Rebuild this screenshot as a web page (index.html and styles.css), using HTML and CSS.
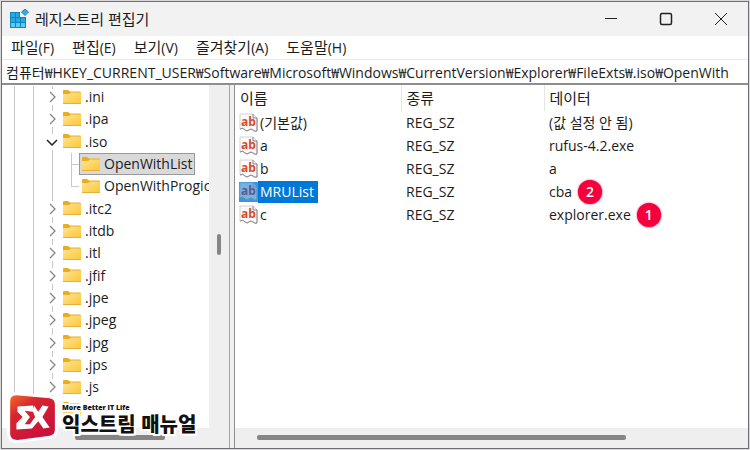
FILE: index.html
```html
<!DOCTYPE html>
<html lang="ko">
  <head>
    <meta charset="utf-8">
    <meta name="viewport" content="width=device-width, initial-scale=1">
    <title>레지스트리 편집기</title>
    <link rel="stylesheet" href="styles.css">
  </head>
  <body>
    <svg class="defs" aria-hidden="true">
      <defs>
        <linearGradient id="folder-fill" x1="0" y1="0" x2="1" y2="1">
          <stop offset="0" stop-color="#ffe593"/>
          <stop offset="1" stop-color="#fcc536"/>
        </linearGradient>
        <linearGradient id="logo-fill" x1="0" y1="0" x2="0.7" y2="1">
          <stop offset="0" stop-color="#f26a2a"/>
          <stop offset="0.35" stop-color="#d8252f"/>
          <stop offset="1" stop-color="#c8103c"/>
        </linearGradient>
      </defs>
      <symbol id="folder" viewBox="0 0 18 15">
        <path d="M0 1Q0 0 1 0H5L7 1.500H17Q18 1.500 18 3V6H0Z" fill="#e9ad1e"/>
        <path d="M0 4H6L8 2.500H17Q18 2.500 18 3V14H0Z" fill="url(#folder-fill)"/>
        <path d="M0 13.500H18" stroke="#e5b03c"/>
      </symbol>
      <symbol id="closed" viewBox="0 0 12 12">
        <path d="M4 1L9 6L4 11" fill="none" stroke="#858585" stroke-width="1.3"/>
      </symbol>
      <symbol id="open" viewBox="0 0 12 12">
        <path d="M1 4L6 9L11 4" fill="none" stroke="#222" stroke-width="1.5"/>
      </symbol>
      <symbol id="sheet" viewBox="0 0 19 20">
        <path d="M1 1H14L18 5V18Q16 19 14 17Q12 15 10 17Q8 19 6 17Q4 14 1 16Z" fill="#fbfbfb" stroke="#d2d2d2"/>
        <path d="M14 1V5H18V18Q16 19 14 17Q12 15 10 17Q8 19 6 17Q4 14 1 16" fill="none" stroke="#858585"/>
      </symbol>
    </svg>

    <div class="window">
      <header class="titlebar">
        <svg class="app-icon" viewBox="0 0 20 20" aria-hidden="true">
          <path d="M1 3H11V8H17V19H1Z" fill="#0b86be"/>
          <path d="M2 4H6V8H2ZM7 4H10V8H7ZM2 9H6V13H2ZM7 9H11V13H7ZM12 9H16V13H12Z" fill="#27a9df"/>
          <path d="M2 14H6V18H2ZM7 14H11V18H7ZM12 14H16V18H12Z" fill="#5ccbf2"/>
          <path d="M16 0L19.500 3L16 6.500L12.500 3Z" fill="#38ace0" stroke="#1686b8"/>
        </svg>
        <h1 class="title">레지스트리 편집기</h1>
        <div class="window-buttons">
          <button class="window-button" aria-label="최소화">
            <svg viewBox="0 0 14 14"><path d="M1 6.500H13"/></svg>
          </button>
          <button class="window-button" aria-label="최대화">
            <svg viewBox="0 0 14 14"><rect x="1.500" y="1.500" width="11" height="11" rx="1.500" stroke-width="1.500"/></svg>
          </button>
          <button class="window-button" aria-label="닫기">
            <svg viewBox="0 0 14 14"><path d="M1 1L13 13M13 1L1 13"/></svg>
          </button>
        </div>
      </header>

      <nav class="menu">
        <button>파일<span>(F)</span></button>
        <button>편집<span>(E)</span></button>
        <button>보기<span>(V)</span></button>
        <button>즐겨찾기<span>(A)</span></button>
        <button>도움말<span>(H)</span></button>
      </nav>

      <input class="address" type="text" aria-label="주소" value="컴퓨터₩HKEY_CURRENT_USER₩Software₩Microsoft₩Windows₩CurrentVersion₩Explorer₩FileExts₩.iso₩OpenWith">

      <main class="panes">
        <section class="tree-pane">
          <ul class="tree">
            <li class="node"><button class="toggle" aria-label="펼치기"><svg><use href="#closed"/></svg></button><svg class="folder"><use href="#folder"/></svg><span class="label">.ini</span></li>
            <li class="node"><button class="toggle" aria-label="펼치기"><svg><use href="#closed"/></svg></button><svg class="folder"><use href="#folder"/></svg><span class="label">.ipa</span></li>
            <li class="node"><button class="toggle" aria-label="접기"><svg><use href="#open"/></svg></button><svg class="folder"><use href="#folder"/></svg><span class="label">.iso</span></li>
            <li class="node child"><span class="branch"></span><span class="item selected"><svg class="folder"><use href="#folder"/></svg><span class="label">OpenWithList</span></span></li>
            <li class="node child last"><span class="branch"></span><span class="item"><svg class="folder"><use href="#folder"/></svg><span class="label">OpenWithProgic</span></span></li>
            <li class="node"><button class="toggle" aria-label="펼치기"><svg><use href="#closed"/></svg></button><svg class="folder"><use href="#folder"/></svg><span class="label">.itc2</span></li>
            <li class="node"><button class="toggle" aria-label="펼치기"><svg><use href="#closed"/></svg></button><svg class="folder"><use href="#folder"/></svg><span class="label">.itdb</span></li>
            <li class="node"><button class="toggle" aria-label="펼치기"><svg><use href="#closed"/></svg></button><svg class="folder"><use href="#folder"/></svg><span class="label">.itl</span></li>
            <li class="node"><button class="toggle" aria-label="펼치기"><svg><use href="#closed"/></svg></button><svg class="folder"><use href="#folder"/></svg><span class="label">.jfif</span></li>
            <li class="node"><button class="toggle" aria-label="펼치기"><svg><use href="#closed"/></svg></button><svg class="folder"><use href="#folder"/></svg><span class="label">.jpe</span></li>
            <li class="node"><button class="toggle" aria-label="펼치기"><svg><use href="#closed"/></svg></button><svg class="folder"><use href="#folder"/></svg><span class="label">.jpeg</span></li>
            <li class="node"><button class="toggle" aria-label="펼치기"><svg><use href="#closed"/></svg></button><svg class="folder"><use href="#folder"/></svg><span class="label">.jpg</span></li>
            <li class="node"><button class="toggle" aria-label="펼치기"><svg><use href="#closed"/></svg></button><svg class="folder"><use href="#folder"/></svg><span class="label">.jps</span></li>
            <li class="node"><button class="toggle" aria-label="펼치기"><svg><use href="#closed"/></svg></button><svg class="folder"><use href="#folder"/></svg><span class="label">.js</span></li>
            <li class="node"><span class="toggle"></span><svg class="folder"><use href="#folder"/></svg></li>
          </ul>
          <div class="scroll-y"><div class="thumb-y"></div></div>
          <div class="scroll-x"><div class="thumb-x"></div></div>
        </section>

        <section class="list-pane">
          <table class="values">
            <thead>
              <tr><th class="col-name">이름</th><th class="col-type">종류</th><th>데이터</th></tr>
            </thead>
            <tbody>
              <tr><td><span class="name"><svg><use href="#sheet"/><text x="2" y="13">ab</text></svg><span>(기본값)</span></span></td><td>REG_SZ</td><td>(값 설정 안 됨)</td></tr>
              <tr><td><span class="name"><svg><use href="#sheet"/><text x="2" y="13">ab</text></svg><span>a</span></span></td><td>REG_SZ</td><td>rufus-4.2.exe</td></tr>
              <tr><td><span class="name"><svg><use href="#sheet"/><text x="2" y="13">ab</text></svg><span>b</span></span></td><td>REG_SZ</td><td>a</td></tr>
              <tr><td><span class="name current"><svg><use href="#sheet"/><text x="2" y="13">ab</text></svg><span>MRUList</span></span></td><td>REG_SZ</td><td><span class="marked">cba <b class="badge">2</b></span></td></tr>
              <tr><td><span class="name"><svg><use href="#sheet"/><text x="2" y="13">ab</text></svg><span>c</span></span></td><td>REG_SZ</td><td><span class="marked">explorer.exe <b class="badge">1</b></span></td></tr>
            </tbody>
          </table>
          <div class="scroll-x"><div class="thumb-x"></div></div>
        </section>
      </main>
    </div>

    <div class="brand">
      <svg class="brand-logo" viewBox="0 0 50 50" aria-hidden="true">
        <path d="M10 4L42 7Q47 8 47 13V37Q47 42 42 43L11 47Q4 47 4 41V10Q4 4 10 4Z" fill="url(#logo-fill)" stroke="#fff" stroke-width="6" stroke-linejoin="round" paint-order="stroke"/>
        <path d="M26 17V14L11 15V20L16 25L10 31V37L25 36L31 29L36 36L42 35L35 25L41 15L35 14L31 20L27 14ZM26 20L28 25L23 32L18 32L23 25L18 19Z" fill="#fff" fill-rule="evenodd"/>
      </svg>
      <div class="brand-text">
        <span class="brand-tagline">More Better IT Life</span>
        <strong class="brand-name">익스트림 매뉴얼</strong>
      </div>
    </div>
  </body>
</html>
```
FILE: styles.css
```css
* {
  box-sizing: border-box;
}

body {
  margin: 0;
  height: 100vh;
  padding: 1px;
  background: #d9d9d9;
  color: #1c1c1c;
  font: 14px/20px "Open Sans", "Noto Sans CJK KR", sans-serif;
  overflow: hidden;
}

button {
  padding: 0;
  border: 0;
  background: none;
  color: inherit;
  font: inherit;
}

.defs {
  position: absolute;
  width: 0;
  height: 0;
}

.window {
  display: flex;
  flex-direction: column;
  height: 100%;
  border: 1px solid #6c7074;
  background: #fff;
}

.titlebar {
  display: flex;
  align-items: center;
  height: 34px;
  padding-left: 7px;
  background: #f2f2f2;
  flex-shrink: 0;
}

.app-icon {
  width: 20px;
  height: 20px;
}

.title {
  flex: 1;
  margin: 0 0 0 6px;
  font-size: 15px;
  font-weight: 400;
}

.window-buttons {
  display: flex;
}

.window-button {
  display: flex;
  align-items: center;
  justify-content: center;
  width: 55px;
  height: 32px;
}

.window-button svg {
  width: 14px;
  height: 14px;
  fill: none;
  stroke: #222;
}

.menu {
  display: flex;
  gap: 18px;
  height: 24px;
  padding: 0 9px;
  border-bottom: 1px solid #e9e9e9;
  font-size: 15px;
  flex-shrink: 0;
}

.menu span {
  font-size: 14px;
}

.address {
  width: 100%;
  height: 23px;
  padding: 0 4px;
  border: 0;
  color: inherit;
  font: inherit;
  flex-shrink: 0;
}

.panes {
  display: flex;
  flex: 1;
  min-height: 0;
  border-top: 2px solid #8e8e8e;
  background: #f0f0f0;
}

.tree-pane {
  display: grid;
  grid-template: 1fr 20px / 1fr 20px;
  width: 228px;
  border-right: 1px solid #a5a5a5;
}

.tree {
  display: grid;
  grid-auto-rows: 1fr;
  min-width: 0;
  margin: 0;
  padding: 1px 0 7px 12px;
  background: #fff;
  list-style: none;
  overflow: hidden;
}

.node {
  display: flex;
  align-items: center;
  min-width: 0;
  padding-left: 31px;
  border-left: 1px solid #c9c9c9;
  background:
    linear-gradient(#c9c9c9, #c9c9c9) 18px 0 / 1px 100% no-repeat,
    linear-gradient(#c9c9c9, #c9c9c9) 37px 0 / 1px 100% no-repeat;
  white-space: nowrap;
}

.toggle {
  display: flex;
  justify-content: center;
  width: 12px;
  height: 16px;
  margin-right: 5px;
  background: #fff;
}

.toggle svg {
  width: 12px;
  height: 16px;
}

.folder {
  width: 18px;
  height: 15px;
  flex-shrink: 0;
}

.label {
  margin-left: 4px;
}

.child {
  padding-left: 56px;
  background:
    linear-gradient(#c9c9c9, #c9c9c9) 18px 0 / 1px 100% no-repeat,
    linear-gradient(#c9c9c9, #c9c9c9) 37px 0 / 1px 100% no-repeat,
    linear-gradient(#c9c9c9, #c9c9c9) 56px 0 / 1px 100% no-repeat;
}

.last {
  background-size: 1px 100%, 1px 100%, 1px 50%;
}

.branch {
  width: 8px;
  border-top: 1px solid #c9c9c9;
  flex-shrink: 0;
}

.item {
  display: flex;
  align-items: center;
  height: 22px;
  padding: 0 2px;
  border: 1px solid transparent;
}

.selected {
  border-color: #999;
  background: #d9d9d9;
}

.scroll-y {
  display: flex;
  align-items: center;
  justify-content: center;
  padding-bottom: 24px;
  background: #efefef;
}

.thumb-y {
  width: 4px;
  height: 21px;
  border-radius: 2px;
  background: #858585;
}

.scroll-x {
  display: flex;
  align-items: center;
  height: 20px;
  padding-bottom: 2px;
  background: #efefef;
}

.thumb-x {
  height: 5px;
  border-radius: 2px;
  background: #858585;
}

.tree-pane .scroll-x {
  grid-column: 1 / 3;
}

.tree-pane .thumb-x {
  width: 40%;
  margin-left: 32%;
}

.list-pane {
  display: flex;
  flex: 1;
  flex-direction: column;
  justify-content: space-between;
  margin-left: 4px;
  border-left: 1px solid #8e8e8e;
  background: #fff;
}

.list-pane .thumb-x {
  width: 72%;
  margin-left: 22px;
}

.values {
  width: 100%;
  border-collapse: collapse;
  table-layout: fixed;
}

.values th,
.values td {
  height: 23px;
  padding: 0 0 0 5px;
  font-weight: 400;
  text-align: left;
  white-space: nowrap;
}

.values th {
  height: 26px;
  font-size: 15px;
}

.values td:first-child {
  padding-left: 4px;
}

.col-name {
  width: 166px;
}

.col-type {
  width: 143px;
}

.values .col-name,
.values .col-type {
  border-right: 1px solid #e4e4e4;
}

.name {
  display: inline-flex;
  align-items: center;
  height: 23px;
  vertical-align: top;
}

.name svg {
  width: 19px;
  height: 20px;
}

.name span {
  padding: 1px 4px 1px 2px;
}

.name text {
  fill: #d94a2b;
  font: 700 12px "Open Sans", sans-serif;
}

.current svg {
  background: #3c94dc;
}

.current use {
  opacity: 0.3;
}

.current text {
  fill: #5d5a86;
}

.current span {
  background: #0078d7;
  color: #fff;
}

.marked {
  display: flex;
  align-items: center;
  gap: 6px;
  height: 23px;
}

.badge {
  width: 24px;
  height: 24px;
  border-radius: 50%;
  background: #f5003d;
  box-shadow: 0 0 2px #f5003d;
  color: #fff;
  font-weight: 600;
  line-height: 24px;
  text-align: center;
}

/* watermark over the lower left corner */
.brand {
  position: absolute;
  bottom: 7px;
  left: 6px;
  display: flex;
  align-items: center;
}

.brand-logo {
  width: 52px;
  height: 52px;
}

.brand-text {
  display: flex;
  flex-direction: column;
  margin-left: 4px;
  padding-top: 6px;
  color: #111;
  text-shadow: 2px 0 #fff, -2px 0 #fff, 0 2px #fff, 0 -2px #fff, 2px 2px #fff, -2px -2px #fff, 2px -2px #fff, -2px 2px #fff;
}

.brand-tagline {
  font-size: 7px;
  font-weight: 800;
  line-height: 8px;
}

.brand-name {
  font: 900 20px/24px "Noto Sans CJK KR", sans-serif;
}
```
